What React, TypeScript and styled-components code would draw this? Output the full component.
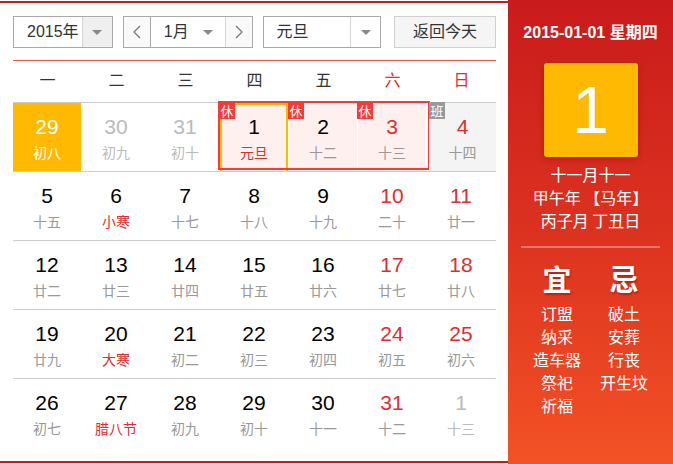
import styled, { createGlobalStyle } from "styled-components";

const RED = "#e02d2d";
const YELLOW = "#ffb900";

const GlobalStyle = createGlobalStyle`
  html, body {
    margin: 0;
    padding: 0;
    background: #ffffff;
  }
  body {
    font-family: "Liberation Sans", Arial, "Noto Sans CJK SC", sans-serif;
  }
  * { box-sizing: border-box; }
`;

type Day = {
  num: number;
  lunar: string;
  other?: boolean;
  weekend?: boolean;
  festival?: boolean;
  today?: boolean;
  selected?: boolean;
  badge?: "休" | "班";
  range?: "start" | "mid" | "end";
};

const weeks: Day[][] = [
  [
    { num: 29, lunar: "初八", other: true, today: true },
    { num: 30, lunar: "初九", other: true },
    { num: 31, lunar: "初十", other: true },
    { num: 1, lunar: "元旦", festival: true, selected: true, badge: "休", range: "start" },
    { num: 2, lunar: "十二", badge: "休", range: "mid" },
    { num: 3, lunar: "十三", weekend: true, badge: "休", range: "end" },
    { num: 4, lunar: "十四", weekend: true, badge: "班" },
  ],
  [
    { num: 5, lunar: "十五" },
    { num: 6, lunar: "小寒", festival: true },
    { num: 7, lunar: "十七" },
    { num: 8, lunar: "十八" },
    { num: 9, lunar: "十九" },
    { num: 10, lunar: "二十", weekend: true },
    { num: 11, lunar: "廿一", weekend: true },
  ],
  [
    { num: 12, lunar: "廿二" },
    { num: 13, lunar: "廿三" },
    { num: 14, lunar: "廿四" },
    { num: 15, lunar: "廿五" },
    { num: 16, lunar: "廿六" },
    { num: 17, lunar: "廿七", weekend: true },
    { num: 18, lunar: "廿八", weekend: true },
  ],
  [
    { num: 19, lunar: "廿九" },
    { num: 20, lunar: "大寒", festival: true },
    { num: 21, lunar: "初二" },
    { num: 22, lunar: "初三" },
    { num: 23, lunar: "初四" },
    { num: 24, lunar: "初五", weekend: true },
    { num: 25, lunar: "初六", weekend: true },
  ],
  [
    { num: 26, lunar: "初七" },
    { num: 27, lunar: "腊八节", festival: true },
    { num: 28, lunar: "初九" },
    { num: 29, lunar: "初十" },
    { num: 30, lunar: "十一" },
    { num: 31, lunar: "十二", weekend: true },
    { num: 1, lunar: "十三", other: true },
  ],
];

const weekdays = ["一", "二", "三", "四", "五", "六", "日"];
const yi = ["订盟", "纳采", "造车器", "祭祀", "祈福"];
const ji = ["破土", "安葬", "行丧", "开生坟"];

export default function App() {
  return (
    <>
      <GlobalStyle />
      <Widget>
        <Main>
          <Toolbar>
            <Select $width={100}>
              <SelectText>2015年</SelectText>
              <SelectArrow $gray>
                <Caret />
              </SelectArrow>
            </Select>
            <MonthGroup>
              <StepButton>
                <Chevron dir="left" />
              </StepButton>
              <MonthValue>
                <SelectText>1月</SelectText>
                <Caret />
              </MonthValue>
              <StepButton $right>
                <Chevron dir="right" />
              </StepButton>
            </MonthGroup>
            <Select $width={119}>
              <SelectText>元旦</SelectText>
              <SelectArrow>
                <Caret />
              </SelectArrow>
            </Select>
            <TodayButton>返回今天</TodayButton>
          </Toolbar>

          <WeekHead>
            {weekdays.map((w, i) => (
              <WeekName key={w} $red={i >= 5}>
                {w}
              </WeekName>
            ))}
          </WeekHead>

          {weeks.map((week, wi) => (
            <WeekRow key={wi} $last={wi === weeks.length - 1}>
              {week.map((d, di) => (
                <DayCell key={di} day={d} />
              ))}
            </WeekRow>
          ))}
        </Main>

        <Side>
          <SideDate>2015-01-01 星期四</SideDate>
          <BigDay>1</BigDay>
          <LunarLines>
            <div>十一月十一</div>
            <div>甲午年 【马年】</div>
            <div>丙子月 丁丑日</div>
          </LunarLines>
          <Divider />
          <Advice>
            <AdviceCol>
              <AdviceTitle>宜</AdviceTitle>
              {yi.map((t) => (
                <AdviceItem key={t}>{t}</AdviceItem>
              ))}
            </AdviceCol>
            <AdviceCol>
              <AdviceTitle>忌</AdviceTitle>
              {ji.map((t) => (
                <AdviceItem key={t}>{t}</AdviceItem>
              ))}
            </AdviceCol>
          </Advice>
        </Side>
      </Widget>
    </>
  );
}

const DayCell = ({ day }: { day: Day }) => {
  const numColor = day.today
    ? "#ffffff"
    : day.other
    ? "#bbbbbb"
    : day.weekend
    ? RED
    : "#000000";
  const lunarColor = day.today
    ? "#ffffff"
    : day.other
    ? "#bbbbbb"
    : day.festival
    ? RED
    : "#999999";
  let bg = "transparent";
  if (day.today) bg = YELLOW;
  else if (day.range) bg = "#fff0f0";
  else if (day.badge === "班") bg = "#f4f4f4";

  return (
    <Cell $range={day.range}>
      <Face $bg={bg} $selected={day.selected} $full={day.badge === "班"}>
        <DayNum style={{ color: numColor }}>{day.num}</DayNum>
        <DayLunar style={{ color: lunarColor }}>{day.lunar}</DayLunar>
      </Face>
      {day.badge && <Badge $work={day.badge === "班"}>{day.badge}</Badge>}
    </Cell>
  );
};

const Chevron = ({ dir }: { dir: "left" | "right" }) => (
  <svg width="8" height="14" viewBox="0 0 8 14">
    <polyline
      points={dir === "left" ? "7,1 1,7 7,13" : "1,1 7,7 1,13"}
      fill="none"
      stroke="#777"
      strokeWidth="1.3"
    />
  </svg>
);

const Widget = styled.div`
  display: flex;
  width: 673px;
  height: 464px;
`;

const Main = styled.div`
  width: 508px;
  height: 462px;
  margin-top: 1px;
  border-top: 2px solid #c91b1b;
  border-bottom: 2px solid #c91b1b;
  padding: 13px 12px 0 13px;
  background: #ffffff;
`;

const Toolbar = styled.div`
  display: flex;
  align-items: center;
  gap: 10px;
  height: 32px;
  font-size: 16px;
  color: #333;
`;

const Select = styled.div<{ $width: number }>`
  display: flex;
  width: ${({ $width }) => $width}px;
  height: 32px;
  border: 1px solid #a9a9a9;
  background: #fff;
`;

const SelectText = styled.div`
  flex: 1;
  padding-left: 13px;
  line-height: 30px;
  white-space: nowrap;
`;

const SelectArrow = styled.div<{ $gray?: boolean }>`
  display: flex;
  align-items: center;
  justify-content: center;
  width: 30px;
  border-left: 1px solid #d4d4d4;
  background: ${({ $gray }) => ($gray ? "#efefef" : "#ffffff")};
`;

const Caret = styled.span`
  width: 0;
  height: 0;
  border-left: 5px solid transparent;
  border-right: 5px solid transparent;
  border-top: 5px solid #888;
`;

const MonthGroup = styled.div`
  display: flex;
  width: 130px;
  height: 32px;
  border: 1px solid #a9a9a9;
`;

const StepButton = styled.div<{ $right?: boolean }>`
  display: flex;
  align-items: center;
  justify-content: center;
  width: 27px;
  background: #f9f9f9;
  ${({ $right }) =>
    $right ? "border-left: 1px solid #d4d4d4;" : "border-right: 1px solid #a9a9a9;"}
`;

const MonthValue = styled.div`
  display: flex;
  align-items: center;
  flex: 1;
  padding-right: 12px;
  background: #fff;
`;

const TodayButton = styled.div`
  margin-left: 3px;
  width: 102px;
  height: 32px;
  line-height: 30px;
  text-align: center;
  border: 1px solid #cfcfcf;
  background: #f5f5f5;
  color: #333;
`;

const WeekHead = styled.div`
  display: grid;
  grid-template-columns: repeat(7, 1fr);
  margin-top: 12px;
  height: 43px;
  border-top: 1px solid #f0504a;
  border-bottom: 1px solid #cccccc;
`;

const WeekName = styled.div<{ $red?: boolean }>`
  line-height: 40px;
  text-align: center;
  font-size: 16px;
  color: ${({ $red }) => ($red ? RED : "#333")};
`;

const WeekRow = styled.div<{ $last?: boolean }>`
  display: grid;
  grid-template-columns: repeat(7, 1fr);
  height: 69px;
  border-bottom: ${({ $last }) => ($last ? "none" : "1px solid #cccccc")};
`;

const Cell = styled.div<{ $range?: "start" | "mid" | "end" }>`
  position: relative;
  display: flex;
  height: 68px;

  ${({ $range }) =>
    $range &&
    `
    &::after {
      content: "";
      position: absolute;
      top: -2px;
      bottom: 1px;
      left: ${$range === "start" ? "-2px" : "0"};
      right: ${$range === "end" ? "-3px" : "0"};
      border-top: 2px solid #f33b3b;
      border-bottom: 2px solid #f33b3b;
      ${$range === "start" ? "border-left: 2px solid #f33b3b;" : ""}
      ${$range === "end" ? "border-right: 2px solid #f33b3b;" : ""}
      pointer-events: none;
    }
  `}
`;

const Face = styled.div<{ $bg: string; $selected?: boolean; $full?: boolean }>`
  flex: 1;
  display: flex;
  flex-direction: column;
  align-items: center;
  margin: ${({ $full }) => ($full ? "0 0 0 2px" : "0 1px 0 0")};
  padding-top: ${({ $selected }) => ($selected ? "10px" : "12px")};
  background: ${({ $bg }) => $bg};
  border: ${({ $selected }) => ($selected ? `2px solid ${YELLOW}` : "none")};
  border-bottom: none;
`;

const DayNum = styled.div`
  font-family: "Liberation Sans", Arial, sans-serif;
  font-size: 21px;
  line-height: 24px;
`;

const DayLunar = styled.div`
  margin-top: 5px;
  font-family: "Noto Sans CJK SC", sans-serif;
  font-size: 14px;
  line-height: 16px;
  white-space: nowrap;
`;

const Badge = styled.div<{ $work?: boolean }>`
  position: absolute;
  top: -1px;
  left: ${({ $work }) => ($work ? "2px" : "-1px")};
  width: 16px;
  height: 17px;
  line-height: 17px;
  text-align: center;
  font-family: "Noto Sans CJK SC", sans-serif;
  font-size: 13px;
  color: #fff;
  background: ${({ $work }) => ($work ? "#999999" : "#f33b3b")};
  z-index: 1;
`;

const Side = styled.div`
  display: flex;
  flex-direction: column;
  align-items: center;
  width: 165px;
  height: 464px;
  padding: 23px 13px 0;
  color: #fff;
  background: linear-gradient(180deg, #c91b1b 0%, #dc3220 50%, #f35225 100%);
`;

const SideDate = styled.div`
  font-size: 16px;
  font-weight: bold;
  line-height: 20px;
  white-space: nowrap;
`;

const BigDay = styled.div`
  margin-top: 20px;
  width: 94px;
  height: 94px;
  border-radius: 3px;
  background: ${YELLOW};
  box-shadow: 0 2px 6px rgba(120, 0, 0, 0.35);
  font-family: "Liberation Sans", Arial, sans-serif;
  font-size: 66px;
  line-height: 94px;
  text-align: center;
`;

const LunarLines = styled.div`
  margin-top: 6px;
  font-family: "Noto Sans CJK SC", sans-serif;
  font-size: 16px;
  line-height: 23px;
  text-align: center;
  white-space: nowrap;
`;

const Divider = styled.div`
  align-self: stretch;
  margin-top: 14px;
  height: 2px;
  background: rgba(255, 255, 255, 0.35);
`;

const Advice = styled.div`
  display: grid;
  grid-template-columns: 67px 67px;
  margin-top: 12px;
`;

const AdviceCol = styled.div`
  display: flex;
  flex-direction: column;
  align-items: center;
  font-family: "Noto Sans CJK SC", sans-serif;
`;

const AdviceTitle = styled.div`
  font-size: 29px;
  font-weight: bold;
  line-height: 36px;
  margin-bottom: 6px;
  text-shadow: 1px 2px 2px rgba(120, 0, 0, 0.4);
`;

const AdviceItem = styled.div`
  font-size: 16px;
  line-height: 23px;
  white-space: nowrap;
`;
